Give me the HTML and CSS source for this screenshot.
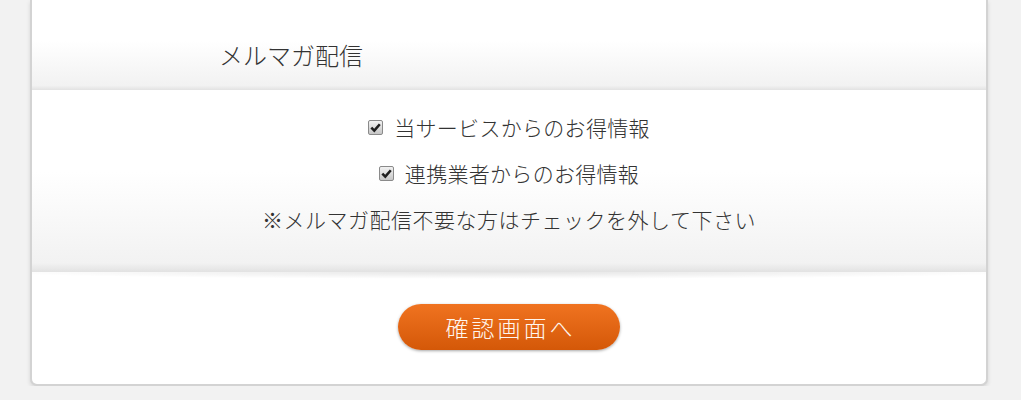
FILE: index.html
```html
<!DOCTYPE html>
<html>
  <head>
    <meta charset="UTF-8">
    <title>メルマガ配信</title>
    <link rel="stylesheet" href="styles.css">
  </head>
  <body>
    <div class="card">
      <div class="section-head">
        <h2>メルマガ配信</h2>
      </div>
      <div class="section-body">
        <label class="check-row">
          <span class="check"><svg viewBox="0 0 10 10" width="11" height="11"><path d="M1.2 5.1 L3.9 7.9 L8.9 2" fill="none" stroke="#1E1E1E" stroke-width="2.3"/></svg></span>
          当サービスからのお得情報
        </label>
        <label class="check-row">
          <span class="check"><svg viewBox="0 0 10 10" width="11" height="11"><path d="M1.2 5.1 L3.9 7.9 L8.9 2" fill="none" stroke="#1E1E1E" stroke-width="2.3"/></svg></span>
          連携業者からのお得情報
        </label>
        <p class="note">※メルマガ配信不要な方はチェックを外して下さい</p>
      </div>
      <div class="submit-group">
        <button type="button" class="primary">確認画面へ</button>
      </div>
    </div>
  </body>
</html>
```

FILE: styles.css
```css
* {
  box-sizing: border-box;
}
body {
  margin: 0;
  background-color: #F2F2F2;
  font-family: "Noto Sans CJK JP", "Noto Sans", sans-serif;
  color: #333;
}
.card {
  width: 958px;
  margin-left: 30px;
  background-color: #FFF;
  border: 2px solid #D3D3D3;
  border-top: none;
  border-radius: 0 0 7px 7px;
  box-shadow: 0 2px 4px rgba(0, 0, 0, 0.12);
  overflow: hidden;
}
.section-head, .section-body {
  position: relative;
  background: linear-gradient(#FFF 45%, #F2F2F2 95%, #E2E2E2);
}
.section-head::after, .section-body::after {
  content: "";
  position: absolute;
  left: 0;
  right: 0;
  bottom: -7px;
  height: 7px;
  background: radial-gradient(ellipse 55% 100% at 50% 0, rgba(0, 0, 0, 0.1), rgba(0, 0, 0, 0) 100%);
}
.section-head {
  height: 90px;
  padding-left: 187px;
  display: flex;
  align-items: center;
  padding-top: 18px;
}
h2 {
  margin: 0;
  font-size: 24px;
  font-weight: 300;
  color: #333;
}
.section-body {
  height: 182px;
  padding-top: 14px;
  display: flex;
  flex-direction: column;
  align-items: center;
}
.check-row {
  height: 46px;
  display: flex;
  align-items: center;
  font-size: 21px;
  font-weight: 300;
  letter-spacing: 0.3px;
  gap: 11px;
}
.check {
  width: 15px;
  height: 15px;
  border: 1px solid #8A8A8A;
  border-radius: 2px;
  background: linear-gradient(#F2F2F2, #C6C6C6);
  display: flex;
  align-items: center;
  justify-content: center;
}
.note {
  margin: 0;
  height: 46px;
  display: flex;
  align-items: center;
  font-size: 21px;
  font-weight: 300;
  letter-spacing: 0.5px;
}
.submit-group {
  height: 112px;
  padding-top: 32px;
  text-align: center;
}
button.primary {
  width: 222px;
  height: 46px;
  border: none;
  border-radius: 23px;
  background: linear-gradient(#F07320, #D45808);
  box-shadow: 0 1px 3px rgba(0, 0, 0, 0.35);
  color: #FFF6EE;
  font-family: "Noto Sans CJK JP", sans-serif;
  font-size: 23px;
  font-weight: 300;
  letter-spacing: 3px;
  padding: 0 0 0 3px;
  cursor: pointer;
}
```
